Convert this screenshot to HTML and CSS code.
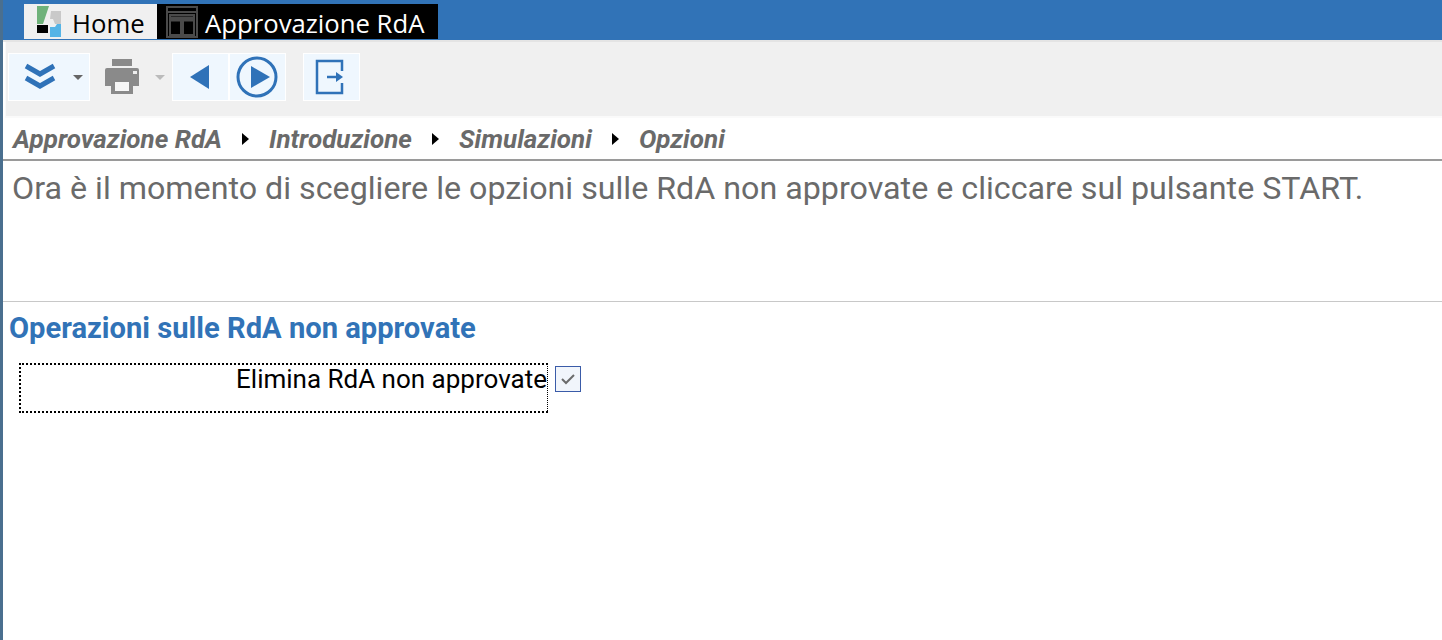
FILE: index.html
```html
<!DOCTYPE html>
<html lang="en">
<head>
  <meta charset="UTF-8">
  <title>Approvazione RdA</title>
  <link rel="stylesheet" href="styles.css">
</head>
<body>
  <div class="tabbar">
    <div class="tab tab-home">
      <svg class="tab-icon" width="24" height="31" viewBox="0 0 24 31">
        <path d="M0 0h12L6 18H0z" fill="#6fb27a"/>
        <path d="M14 5h10v13h-6l-2-5h-3z" fill="#c9c9c9"/>
        <path d="M0 19h11v8H0z" fill="#000"/>
        <path d="M13 21h5l2-3h4v13H13z" fill="#55b4e6"/>
      </svg>
      <span>Home</span>
    </div>
    <div class="tab tab-active">
      <svg class="tab-icon" width="32" height="32" viewBox="0 0 32 32" fill="none" stroke="#4a4a4a" stroke-width="2">
        <path d="M1 1h30v30H1z"/>
        <path d="M1 6h30"/>
        <path d="M4 9h24v20H4z"/>
        <path d="M4 13h24" stroke-width="5"/>
        <path d="M16 13v16" stroke-width="4"/>
      </svg>
      <span>Approvazione RdA</span>
    </div>
  </div>

  <div class="toolbar">
    <div class="tool tool-menu">
      <svg width="32" height="28" viewBox="0 0 32 28" fill="none" stroke="#2f72b8" stroke-width="5">
        <path d="M2 3l14 8 14-8M2 15l14 8 14-8"/>
      </svg>
      <i class="caret"></i>
    </div>
    <div class="tool-print">
      <svg width="36" height="38" viewBox="0 0 36 38">
        <path d="M8 1h20v7H8z" fill="#8a8a8a"/>
        <path d="M3 10h30a2 2 0 0 1 2 2v16h-6v-8H7v8H1V12a2 2 0 0 1 2-2z" fill="#8a8a8a"/>
        <path d="M7 20h22v16H7z" fill="#8a8a8a"/>
        <path d="M11 24h14v9H11z" fill="#f7f7f7"/>
        <path d="M29 13h4v3h-4z" fill="#eee"/>
      </svg>
      <i class="caret caret-off"></i>
    </div>
    <div class="tool tool-small">
      <svg class="icon-back" width="20" height="24" viewBox="0 0 20 24"><path d="M0 12 19 0v24z" fill="#2f72b8"/></svg>
    </div>
    <div class="tool tool-small">
      <svg class="icon-play" width="42" height="42" viewBox="0 0 42 42">
        <circle cx="21" cy="21" r="19" fill="none" stroke="#2f72b8" stroke-width="3"/>
        <path d="M15 10l19 11-19 11z" fill="#2f72b8"/>
      </svg>
    </div>
    <div class="tool tool-exit">
      <svg class="icon-exit" width="30" height="36" viewBox="0 0 30 36" fill="none" stroke="#2f72b8" stroke-width="2.500">
        <path d="M27 12V2H2v32h25V24"/>
        <path d="M12 18h13"/>
        <path d="M21 13l7 5-7 5z" fill="#2f72b8" stroke="none"/>
      </svg>
    </div>
  </div>

  <div class="crumbs">
    <span>Approvazione RdA</span><i class="sep"></i>
    <span>Introduzione</span><i class="sep"></i>
    <span>Simulazioni</span><i class="sep"></i>
    <span>Opzioni</span>
  </div>

  <div class="intro">Ora è il momento di scegliere le opzioni sulle RdA non approvate e cliccare sul pulsante START.</div>

  <h2 class="section-title">Operazioni sulle RdA non approvate</h2>

  <div class="field">
    <label class="field-label">Elimina RdA non approvate</label>
    <span class="check">
      <svg width="14" height="12" viewBox="0 0 14 12" fill="none" stroke="#6b6b6b" stroke-width="2"><path d="M1 6l4 4 8-8"/></svg>
    </span>
  </div>
</body>
</html>
```

FILE: styles.css
```css
html, body {
  height: 100%;
}

body {
  margin: 0;
  overflow: hidden;
  background: #fff;
  border-left: 3px solid #4a6f8f;
  font-family: Roboto, Arial, sans-serif;
}

/* top tabs */
.tabbar {
  display: flex;
  height: 36px;
  padding: 4px 0 0 24px;
  margin-left: -3px;
  background: #3173b7;
  border-bottom: 2px solid #e4e4e4;
}

.tab {
  display: flex;
  align-items: center;
  height: 35px;
  box-sizing: border-box;
  font-family: "Open Sans", "Noto Sans", sans-serif;
  font-size: 25.700px;
  white-space: nowrap;
}

.tab span {
  padding-top: 3px;
}

.tab-home {
  width: 133px;
  padding-left: 13px;
  gap: 11px;
  background: #f0f0f0;
  color: #000;
}

.tab-active {
  width: 281px;
  padding-left: 9px;
  gap: 7px;
  background: #000;
  color: #fff;
}

/* toolbar */
.toolbar {
  display: flex;
  align-items: flex-start;
  height: 63px;
  padding: 11px 0 0 2px;
  margin-left: 2px;
  background: #f0f0f0;
  border-left: 1px solid #fafafa;
  border-bottom: 2px solid #fafafa;
}

.tool {
  display: flex;
  align-items: center;
  justify-content: center;
  height: 46px;
  background: #eff7fe;
  border: 1px solid #fff;
}

.tool-menu {
  justify-content: flex-start;
  box-sizing: border-box;
  width: 82px;
  height: 48px;
  padding-left: 15px;
  gap: 17px;
}

.tool-print {
  display: flex;
  align-items: center;
  width: 82px;
  height: 48px;
  padding-left: 14px;
  gap: 15px;
  box-sizing: border-box;
}

.tool-small {
  width: 55px;
}

.icon-back {
  margin-right: 2px;
}

.icon-play {
  margin-right: 2px;
}

.tool-exit {
  width: 55px;
  margin-left: 17px;
}

.icon-exit {
  margin-right: 4px;
}

.caret {
  width: 0;
  height: 0;
  border-left: 5px solid transparent;
  border-right: 5px solid transparent;
  border-top: 5px solid #666;
}

.caret-off {
  border-top-color: #bbb;
}

/* breadcrumb */
.crumbs {
  display: flex;
  align-items: center;
  height: 41px;
  padding: 0 0 2px 10px;
  box-sizing: border-box;
  margin-top: 2px;
  border-bottom: 2px solid #9a9a9a;
  font-size: 26px;
  font-weight: 700;
  font-style: italic;
  color: #6a6a6a;
}

.sep {
  width: 0;
  height: 0;
  margin: 0 20px;
  border-top: 6px solid transparent;
  border-bottom: 6px solid transparent;
  border-left: 7px solid #000;
}

.intro {
  height: 141px;
  padding: 8px 0 0 9px;
  box-sizing: border-box;
  border-bottom: 1px solid #c8c8c8;
  font-size: 32.220px;
  color: #6a6a6a;
}

.section-title {
  margin: 9px 0 0 6px;
  font-size: 29.150px;
  font-weight: 700;
  color: #3173b7;
}

.field {
  display: flex;
  align-items: flex-start;
  margin: 18px 0 0 16px;
}

.field-label {
  width: 529px;
  height: 50px;
  box-sizing: border-box;
  border: 2px dotted #000;
  border-right-width: 1px;
  text-align: right;
  font-size: 26px;
  line-height: 29px;
  color: #000;
}

.check {
  display: flex;
  align-items: center;
  justify-content: center;
  width: 26px;
  height: 26px;
  margin: 3px 0 0 7px;
  box-sizing: border-box;
  background: #f1f5fb;
  border: 1px solid #3a5ba8;
}
```
